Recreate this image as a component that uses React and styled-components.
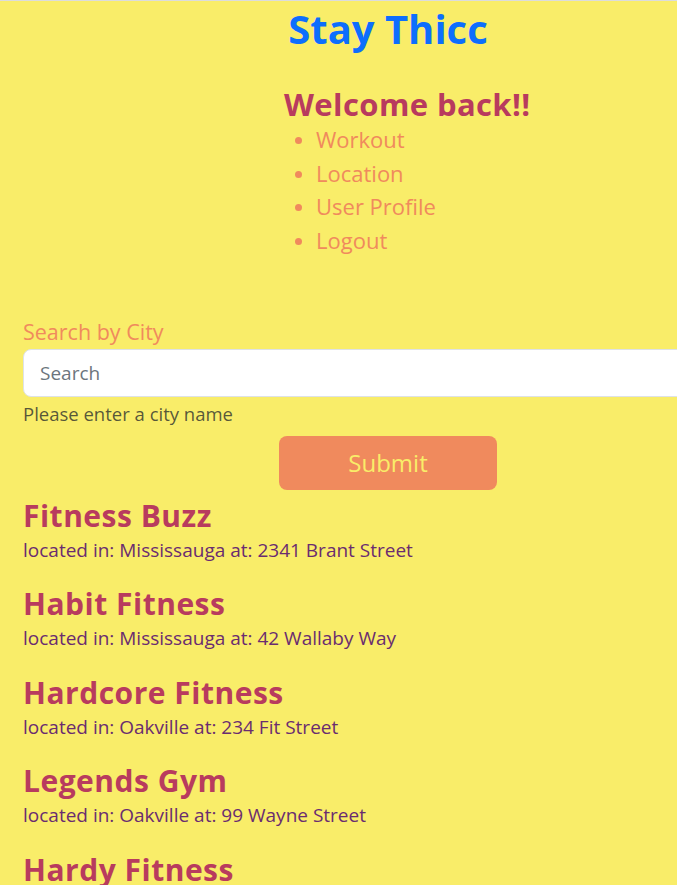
import styled, { createGlobalStyle } from 'styled-components';

const gyms = [
	{ name: 'Fitness Buzz', city: 'Mississauga', address: '2341 Brant Street' },
	{ name: 'Habit Fitness', city: 'Mississauga', address: '42 Wallaby Way' },
	{ name: 'Hardcore Fitness', city: 'Oakville', address: '234 Fit Street' },
	{ name: 'Legends Gym', city: 'Oakville', address: '99 Wayne Street' },
	{ name: 'Hardy Fitness', city: 'Oakville', address: '12 Strong Road' },
];

const links = ['Workout', 'Location', 'User Profile', 'Logout'];

const App = () => {
	return (
		<Wrapper>
			<GlobalStyle />
			<Page>
				<Title>Stay Thicc</Title>
				<Nav>
					<Welcome>Welcome back!!</Welcome>
					<NavList>
						{links.map((link) => (
							<li key={link}>
								<NavLink href='#'>{link}</NavLink>
							</li>
						))}
					</NavList>
				</Nav>
				<Form onSubmit={(e) => e.preventDefault()}>
					<Label htmlFor='city'>Search by City</Label>
					<Input id='city' type='text' placeholder='Search' />
					<Hint>Please enter a city name</Hint>
					<SubmitButton type='submit'>Submit</SubmitButton>
				</Form>
				{gyms.map((gym) => (
					<Gym key={gym.name}>
						<GymName>{gym.name}</GymName>
						<GymInfo>
							located in: {gym.city} at: {gym.address}
						</GymInfo>
					</Gym>
				))}
			</Page>
		</Wrapper>
	);
};

export default App;

const GlobalStyle = createGlobalStyle`
	html, body {
		margin: 0;
		background-color: #f9ed69;
	}
	body {
		border-top: 1px solid #dcdcdc;
		font-family: 'Open Sans', 'Noto Sans', sans-serif;
		overflow-x: hidden;
	}
	* {
		box-sizing: border-box;
	}
`;
const Wrapper = styled.div`
	width: 100%;
	overflow: hidden;
`;
const Page = styled.div`
	width: 777px;
	padding: 0 24px 40px 23px;
`;
const Title = styled.h1`
	margin: 4px 0 0;
	text-align: center;
	color: #0d6efd;
	font-size: 40px;
	font-weight: 700;
	line-height: 1.2;
`;
const Nav = styled.div`
	padding-left: 261px;
	margin-top: 33px;
`;
const Welcome = styled.h2`
	margin: 0;
	color: #b83b5e;
	font-size: 31px;
	font-weight: 700;
	line-height: 1.2;
	letter-spacing: 0.4px;
`;
const NavList = styled.ul`
	margin: 0;
	padding-left: 32px;
	color: #f08a5d;
	font-size: 22px;
	line-height: 33.5px;
	li::marker {
		font-size: 20px;
	}
`;
const NavLink = styled.a`
	color: #f08a5d;
	text-decoration: none;
`;
const Form = styled.form`
	margin-top: 62px;
	display: flex;
	flex-direction: column;
`;
const Label = styled.label`
	color: #f08a5d;
	font-size: 21.5px;
	line-height: 1.2;
	margin-bottom: 4px;
`;
const Input = styled.input`
	width: 100%;
	height: 48px;
	padding: 8px 16px;
	font-family: inherit;
	font-size: 19px;
	color: #212529;
	background: #fff;
	border: 1px solid #dee2e6;
	border-radius: 8px;
	&::placeholder {
		color: #6c757d;
	}
`;
const Hint = styled.div`
	margin-top: 4px;
	color: rgba(33, 37, 41, 0.75);
	font-size: 18.5px;
	line-height: 1.4;
`;
const SubmitButton = styled.button`
	align-self: center;
	width: 218px;
	height: 54px;
	margin-top: 9px;
	font-family: inherit;
	font-size: 24px;
	color: #f9ed69;
	background-color: #f08a5d;
	border: none;
	border-radius: 8px;
`;
const Gym = styled.div`
	margin-top: 8px;
	margin-bottom: 22px;
	& + & {
		margin-top: 0;
	}
`;
const GymName = styled.h2`
	margin: 0;
	color: #b83b5e;
	font-size: 30px;
	font-weight: 700;
	line-height: 1.2;
	letter-spacing: 0.5px;
`;
const GymInfo = styled.p`
	margin: 2px 0 0;
	color: #6a2c70;
	font-size: 19px;
	line-height: 1.5;
`;
